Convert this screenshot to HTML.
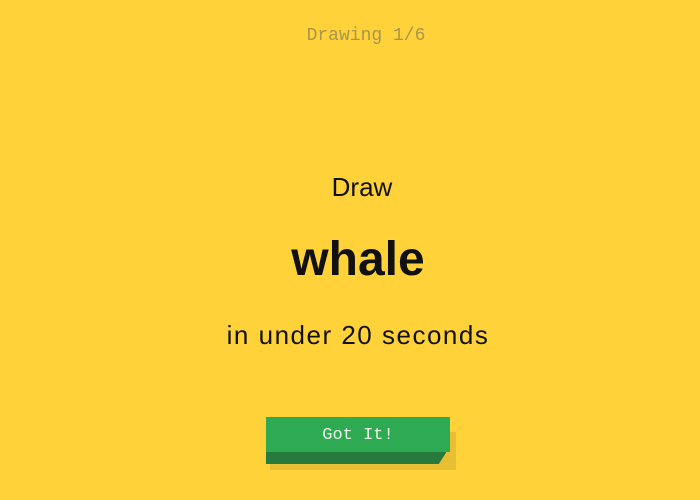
<!DOCTYPE html>
<html><head><style>
html,body{margin:0;padding:0;width:700px;height:500px;background:#FFD23A;overflow:hidden;font-family:"Liberation Sans",sans-serif;color:#111}
.t{position:absolute;left:0;width:700px;text-align:center;white-space:nowrap}
#h{top:26px;left:16px;font-family:"Liberation Mono",monospace;font-size:18px;color:#A8964A}
#d{top:172px;font-size:26px;left:12px}
#w{top:232px;font-size:48px;font-weight:bold;letter-spacing:0px;left:8px}
#s{top:320px;font-size:26px;letter-spacing:1.5px;left:8px}
.sh{position:absolute;left:270px;top:432px;width:186px;height:38px;background:#E8BF33}
.bot{position:absolute;left:266px;top:450px;width:180px;height:14px;background:#267A3B;clip-path:polygon(0 0,100% 0,100% 20%,96% 100%,0 100%)}
.top{position:absolute;left:266px;top:417px;width:184px;height:35px;background:#2EAB52;color:#EAF5E8;font-family:"Liberation Mono",monospace;font-size:17px;text-align:center;line-height:37px}
</style></head><body>
<div class="t" id="h">Drawing 1/6</div>
<div class="t" id="d">Draw</div>
<div class="t" id="w">whale</div>
<div class="t" id="s">in under 20 seconds</div>
<div class="sh"></div>
<div class="bot"></div>
<div class="top">Got It!</div>
</body></html>
